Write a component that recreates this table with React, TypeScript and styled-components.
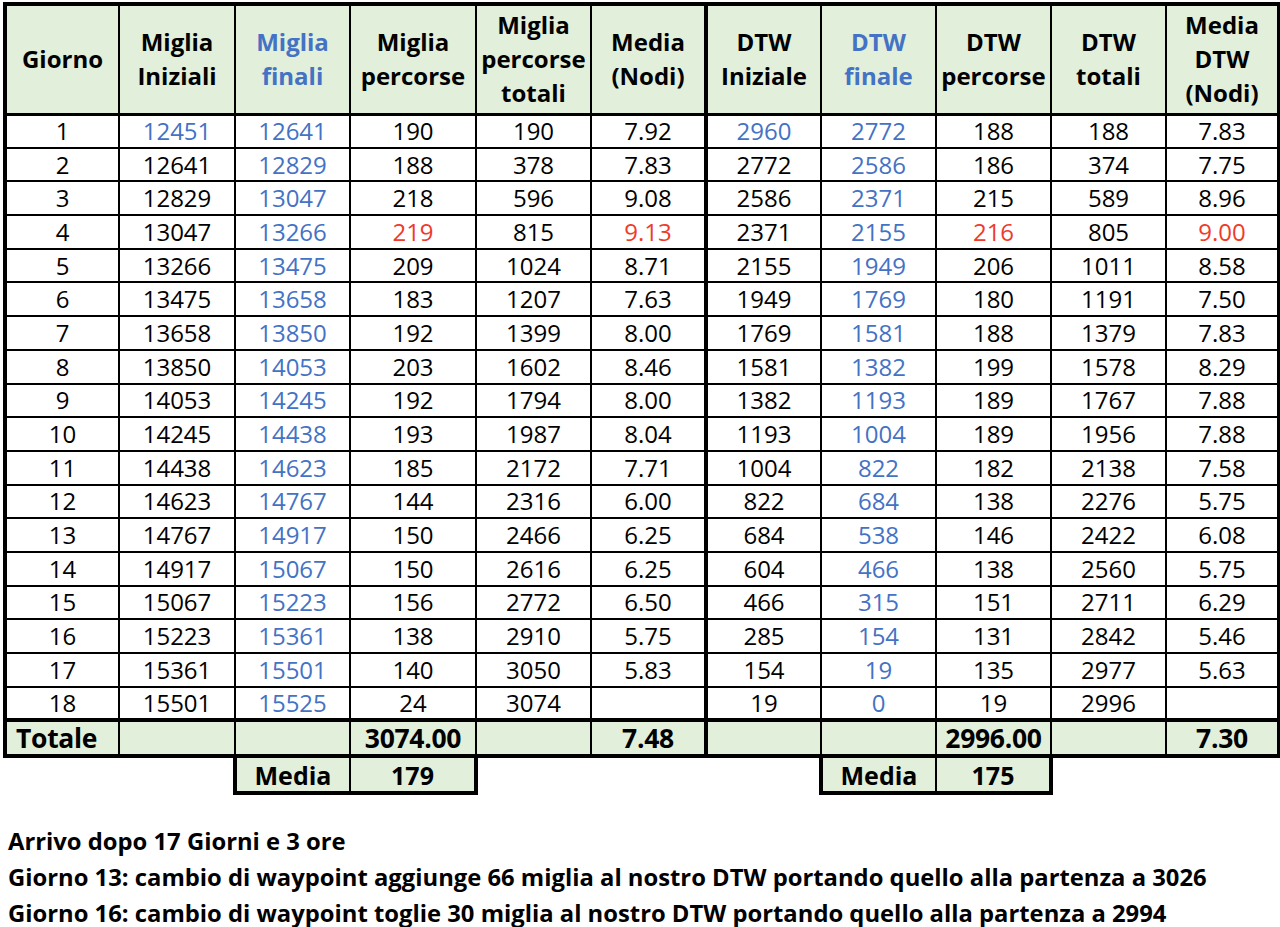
import styled, { createGlobalStyle } from "styled-components"

const GlobalStyle = createGlobalStyle`
  html, body {
    margin: 0;
    padding: 0;
    background: #ffffff;
  }

  body {
    font-family: "Open Sans", "Liberation Sans", sans-serif;
    color: #000000;
  }
`

type Tone = "blue" | "red" | undefined

const widths = [114, 116, 115, 126, 115, 115, 115, 115, 115, 115, 113]

const headers: { lines: string[]; blue?: boolean }[] = [
  { lines: ["Giorno"] },
  { lines: ["Miglia", "Iniziali"] },
  { lines: ["Miglia", "finali"], blue: true },
  { lines: ["Miglia", "percorse"] },
  { lines: ["Miglia", "percorse", "totali"] },
  { lines: ["Media", "(Nodi)"] },
  { lines: ["DTW", "Iniziale"] },
  { lines: ["DTW", "finale"], blue: true },
  { lines: ["DTW", "percorse"] },
  { lines: ["DTW", "totali"] },
  { lines: ["Media", "DTW", "(Nodi)"] },
]

const rows: (number | string)[][] = [
  [1, 12451, 12641, 190, 190, "7.92", 2960, 2772, 188, 188, "7.83"],
  [2, 12641, 12829, 188, 378, "7.83", 2772, 2586, 186, 374, "7.75"],
  [3, 12829, 13047, 218, 596, "9.08", 2586, 2371, 215, 589, "8.96"],
  [4, 13047, 13266, 219, 815, "9.13", 2371, 2155, 216, 805, "9.00"],
  [5, 13266, 13475, 209, 1024, "8.71", 2155, 1949, 206, 1011, "8.58"],
  [6, 13475, 13658, 183, 1207, "7.63", 1949, 1769, 180, 1191, "7.50"],
  [7, 13658, 13850, 192, 1399, "8.00", 1769, 1581, 188, 1379, "7.83"],
  [8, 13850, 14053, 203, 1602, "8.46", 1581, 1382, 199, 1578, "8.29"],
  [9, 14053, 14245, 192, 1794, "8.00", 1382, 1193, 189, 1767, "7.88"],
  [10, 14245, 14438, 193, 1987, "8.04", 1193, 1004, 189, 1956, "7.88"],
  [11, 14438, 14623, 185, 2172, "7.71", 1004, 822, 182, 2138, "7.58"],
  [12, 14623, 14767, 144, 2316, "6.00", 822, 684, 138, 2276, "5.75"],
  [13, 14767, 14917, 150, 2466, "6.25", 684, 538, 146, 2422, "6.08"],
  [14, 14917, 15067, 150, 2616, "6.25", 604, 466, 138, 2560, "5.75"],
  [15, 15067, 15223, 156, 2772, "6.50", 466, 315, 151, 2711, "6.29"],
  [16, 15223, 15361, 138, 2910, "5.75", 285, 154, 131, 2842, "5.46"],
  [17, 15361, 15501, 140, 3050, "5.83", 154, 19, 135, 2977, "5.63"],
  [18, 15501, 15525, 24, 3074, "", 19, 0, 19, 2996, ""],
]

const toneFor = (r: number, c: number): Tone => {
  if (c === 2 || c === 7) return "blue"
  if (r === 0 && (c === 1 || c === 6)) return "blue"
  if (r === 3 && (c === 3 || c === 5 || c === 8 || c === 10)) return "red"
  return undefined
}

const totals = ["Totale", "", "", "3074.00", "", "7.48", "", "", "2996.00", "", "7.30"]

const notes = [
  "Arrivo dopo 17 Giorni e 3 ore",
  "Giorno 13: cambio di waypoint aggiunge 66 miglia al nostro DTW portando quello alla partenza a 3026",
  "Giorno 16: cambio di waypoint toglie 30 miglia al nostro DTW portando quello alla partenza a 2994",
]

const App = () => {
  return (
    <>
      <GlobalStyle />
      <Page>
        <Sheet>
          <colgroup>
            {widths.map((w, i) => (
              <col key={i} style={{ width: w }} />
            ))}
          </colgroup>
          <thead>
            <HeadRow>
              {headers.map((h, i) => (
                <HeadCell key={i} $blue={h.blue}>
                  {h.lines.map((l, j) => (
                    <span key={j}>{l}</span>
                  ))}
                </HeadCell>
              ))}
            </HeadRow>
          </thead>
          <tbody>
            {rows.map((row, r) => (
              <DataRow key={r}>
                {row.map((v, c) => (
                  <DataCell key={c} $tone={toneFor(r, c)}>
                    {v}
                  </DataCell>
                ))}
              </DataRow>
            ))}
            <TotalRow>
              {totals.map((v, c) => (
                <TotalCell key={c} $label={c === 0}>
                  {v}
                </TotalCell>
              ))}
            </TotalRow>
            <MediaRow>
              <Blank colSpan={2} />
              <MediaCell $first>Media</MediaCell>
              <MediaCell>179</MediaCell>
              <Blank colSpan={3} />
              <MediaCell $first>Media</MediaCell>
              <MediaCell>175</MediaCell>
              <Blank colSpan={2} />
            </MediaRow>
          </tbody>
        </Sheet>

        <Notes>
          {notes.map((n, i) => (
            <p key={i}>{n}</p>
          ))}
        </Notes>
      </Page>
    </>
  )
}

const Page = styled.div`
  width: 1280px;
  padding: 2px 0 0 3px;
  box-sizing: border-box;
`

const Sheet = styled.table`
  border-collapse: collapse;
  table-layout: fixed;
  width: 1274px;

  td, th {
    padding: 0;
    text-align: center;
    border: 2px solid #000;
  }

  tr > :first-child {
    border-left: 4px solid #000;
  }

  tr > :last-child {
    border-right: 4px solid #000;
  }

  tr > :nth-child(7) {
    border-left: 4px solid #000;
  }
`

const HeadRow = styled.tr`
  height: 110px;
`

const HeadCell = styled.th<{ $blue?: boolean }>`
  background: #e2efda;
  color: ${(p) => (p.$blue ? "#4472c4" : "#000")};
  font-size: 24px;
  font-weight: 700;
  line-height: 34px;
  border-top: 4px solid #000 !important;
  border-bottom: 3px solid #000 !important;

  span {
    display: block;
  }
`

const DataRow = styled.tr`
  height: 33.7px;
`

const DataCell = styled.td<{ $tone?: Tone }>`
  font-size: 24px;
  line-height: 30px;
  color: ${(p) =>
    p.$tone === "blue" ? "#4472c4" : p.$tone === "red" ? "#ee3b2b" : "#000"};
`

const TotalRow = styled.tr`
  height: 36px;
`

const TotalCell = styled.td<{ $label?: boolean }>`
  && {
    background: #e2efda;
    font-size: 26.5px;
    font-weight: 700;
    line-height: 30px;
    letter-spacing: -0.3px;
    border-top: 4px solid #000;
    border-bottom: 4px solid #000;
    text-align: ${(p) => (p.$label ? "left" : "center")};
    padding-left: ${(p) => (p.$label ? "9px" : "0")};
  }
`

const MediaRow = styled.tr`
  height: 37px;
`

const Blank = styled.td`
  &&&& {
    border: none;
  }
`

const MediaCell = styled.td<{ $first?: boolean }>`
  && {
    background: #e2efda;
    font-size: 25px;
    font-weight: 700;
    line-height: 30px;
    border-bottom: 4px solid #000;
    border-left: ${(p) => (p.$first ? "4px" : "2px")} solid #000;
    border-right: ${(p) => (p.$first ? "2px" : "4px")} solid #000;
  }
`

const Notes = styled.div`
  margin-top: 28px;
  padding-left: 5px;

  p {
    margin: 0;
    font-size: 23.8px;
    font-weight: 700;
    line-height: 36px;
    white-space: nowrap;
  }
`

export default App
